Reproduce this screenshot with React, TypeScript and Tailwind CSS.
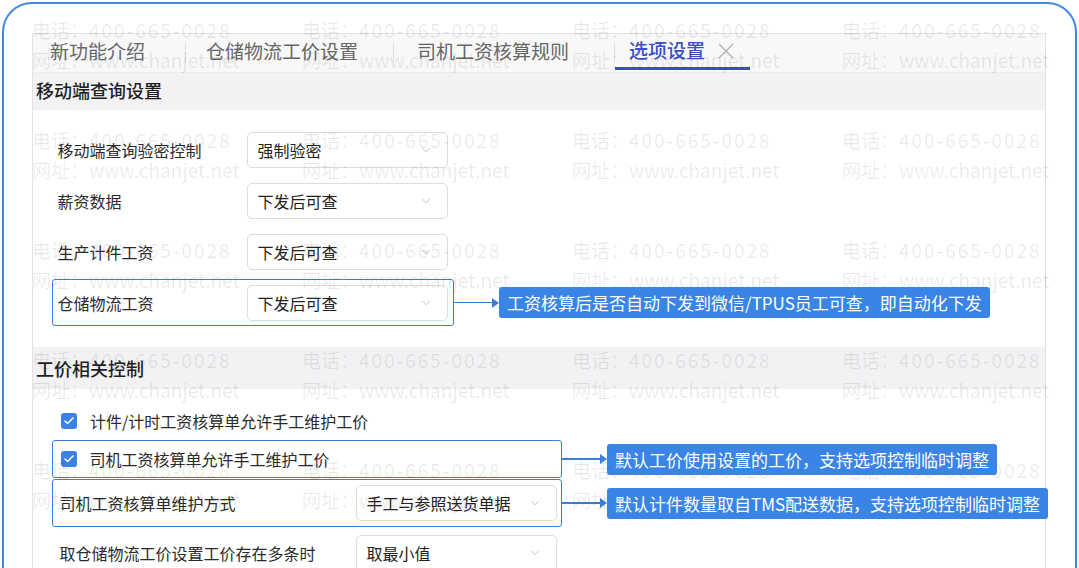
import { Check, ChevronDown, X } from "lucide-react";

const MARK_COLS = [32, 302, 572, 842];
const MARK_ROWS = [15, 125, 235, 345, 455];

function Watermark() {
    return (
        <div className="pointer-events-none absolute inset-0 z-10 select-none text-[19px] leading-[30px] text-black/[0.09]">
            {MARK_ROWS.map((top) =>
                MARK_COLS.map((left) => (
                    <div key={`${top}-${left}`} className="absolute whitespace-nowrap" style={{ top, left }}>
                        <div>
                            电话：<span className="tracking-[2px]">400-665-0028</span>
                        </div>
                        <div>网址：www.chanjet.net</div>
                    </div>
                ))
            )}
        </div>
    );
}

function Select({ value }: { value: string }) {
    return (
        <div className="flex h-[36px] w-[201px] shrink-0 items-center justify-between rounded-[5px] border border-[#dcdcdc] bg-white pl-[10px] pr-[14px] text-[16px] text-[#222]">
            <span>{value}</span>
            <ChevronDown className="h-[14px] w-[14px] text-[#b8b8b8]" strokeWidth={1.5} />
        </div>
    );
}

function Note({ text }: { text: string }) {
    return (
        <div className="flex shrink-0 items-center">
            <div className="h-[1.5px] w-[38px] bg-[#3b7fd6]" />
            <div className="h-0 w-0 border-y-[5px] border-l-[7px] border-y-transparent border-l-[#3b7fd6]" />
            <div className="relative z-20 h-[31px] whitespace-nowrap rounded-[3px] bg-[#3a84e6] px-[8px] text-[17px] leading-[31px] text-white">
                {text}
            </div>
        </div>
    );
}

function Checkbox() {
    return (
        <span className="flex h-[16px] w-[16px] shrink-0 items-center justify-center rounded-[3px] bg-[#3b82e6]">
            <Check className="h-[12px] w-[12px] text-white" strokeWidth={3} />
        </span>
    );
}

const Sep = () => <div className="h-[20px] w-px self-center bg-[#dedede]" />;

const MOBILE_ROWS = [
    { label: "移动端查询验密控制", value: "强制验密" },
    { label: "薪资数据", value: "下发后可查" },
    { label: "生产计件工资", value: "下发后可查" },
];

export default function App() {
    return (
        <div className="relative h-[568px] w-[1079px] overflow-hidden bg-white font-['Noto_Sans_CJK_SC','Noto_Sans',sans-serif] text-[#2a2a2a]">
            {/* outer rounded frame */}
            <div className="mx-[2px] mt-[2px] h-[620px] rounded-[30px] border-2 border-[#4288e2] bg-white pl-[28px] pr-[29px] pt-[29px]">
                <div className="flex h-full flex-col border border-[#e3e3e3] bg-white">
                    {/* tabs */}
                    <div className="flex h-[39px] shrink-0 items-stretch border-b border-[#ececec] bg-[#f8f8f8] text-[19px] text-[#666]">
                        <div className="flex items-center pb-[3px] pl-[17px] pr-[40px]">新功能介绍</div>
                        <Sep />
                        <div className="flex items-center pb-[3px] pl-[20px] pr-[35px]">仓储物流工价设置</div>
                        <Sep />
                        <div className="flex items-center pb-[3px] pl-[23px] pr-[45px]">司机工资核算规则</div>
                        <Sep />
                        <div className="mb-[2px] flex items-center border-b-[3px] border-[#3a4fc4] pl-[14px] pr-[11px]">
                            <span className="font-medium text-[#3a4fc4]">选项设置</span>
                            <X className="ml-[8px] h-[26px] w-[26px] text-[#b0b0b0]" strokeWidth={1.2} />
                        </div>
                    </div>

                    {/* 移动端查询设置 */}
                    <div className="flex h-[37px] shrink-0 items-center bg-[#f2f2f4] pb-[3px] pl-[3px] text-[18px] font-medium text-[#1f1f1f]">
                        移动端查询设置
                    </div>
                    <div className="flex flex-col gap-[4px] pt-[16px]">
                        {MOBILE_ROWS.map((r) => (
                            <div key={r.label} className="flex h-[47px] items-center">
                                <div className="ml-[19px] flex h-full w-[402px] shrink-0 items-center rounded-[3px] border-[1.5px] border-transparent pl-[4.5px]">
                                    <span className="w-[189px] shrink-0 text-[16px]">{r.label}</span>
                                    <Select value={r.value} />
                                </div>
                            </div>
                        ))}
                        <div className="flex h-[47px] items-center">
                            <div className="ml-[19px] flex h-full w-[402px] shrink-0 items-center rounded-[3px] border-[1.5px] border-[#3b7fd6] pl-[4.5px]">
                                <span className="w-[189px] shrink-0 text-[16px]">仓储物流工资</span>
                                <Select value="下发后可查" />
                            </div>
                            <Note text="工资核算后是否自动下发到微信/TPUS员工可查，即自动化下发" />
                        </div>
                    </div>

                    {/* 工价相关控制 */}
                    <div className="mt-[21px] flex h-[42px] shrink-0 items-center bg-[#f2f2f4] pl-[3px] text-[18px] font-medium text-[#1f1f1f]">
                        工价相关控制
                    </div>
                    <div className="flex flex-col pt-[14px] text-[16px]">
                        <div className="flex h-[36px] items-center gap-[13px] pl-[28px]">
                            <Checkbox />
                            <span>计件/计时工资核算单允许手工维护工价</span>
                        </div>
                        <div className="mt-[1px] flex items-center">
                            <div className="ml-[19px] flex h-[38px] w-[510px] shrink-0 items-center gap-[13px] rounded-[3px] border-[1.5px] border-[#3b7fd6] pl-[7.5px]">
                                <Checkbox />
                                <span>司机工资核算单允许手工维护工价</span>
                            </div>
                            <Note text="默认工价使用设置的工价，支持选项控制临时调整" />
                        </div>
                        <div className="mt-[1px] flex items-center">
                            <div className="ml-[19px] flex h-[48px] w-[510px] shrink-0 items-center rounded-[3px] border-[1.5px] border-[#3b7fd6] pl-[6.5px]">
                                <span className="w-[296px] shrink-0">司机工资核算单维护方式</span>
                                <Select value="手工与参照送货单据" />
                            </div>
                            <Note text="默认计件数量取自TMS配送数据，支持选项控制临时调整" />
                        </div>
                        <div className="mt-[2px] flex items-center">
                            <div className="ml-[19px] flex h-[48px] w-[510px] shrink-0 items-center rounded-[3px] border-[1.5px] border-transparent pl-[6.5px]">
                                <span className="w-[296px] shrink-0">取仓储物流工价设置工价存在多条时</span>
                                <Select value="取最小值" />
                            </div>
                        </div>
                    </div>
                </div>
            </div>
            <Watermark />
        </div>
    );
}
